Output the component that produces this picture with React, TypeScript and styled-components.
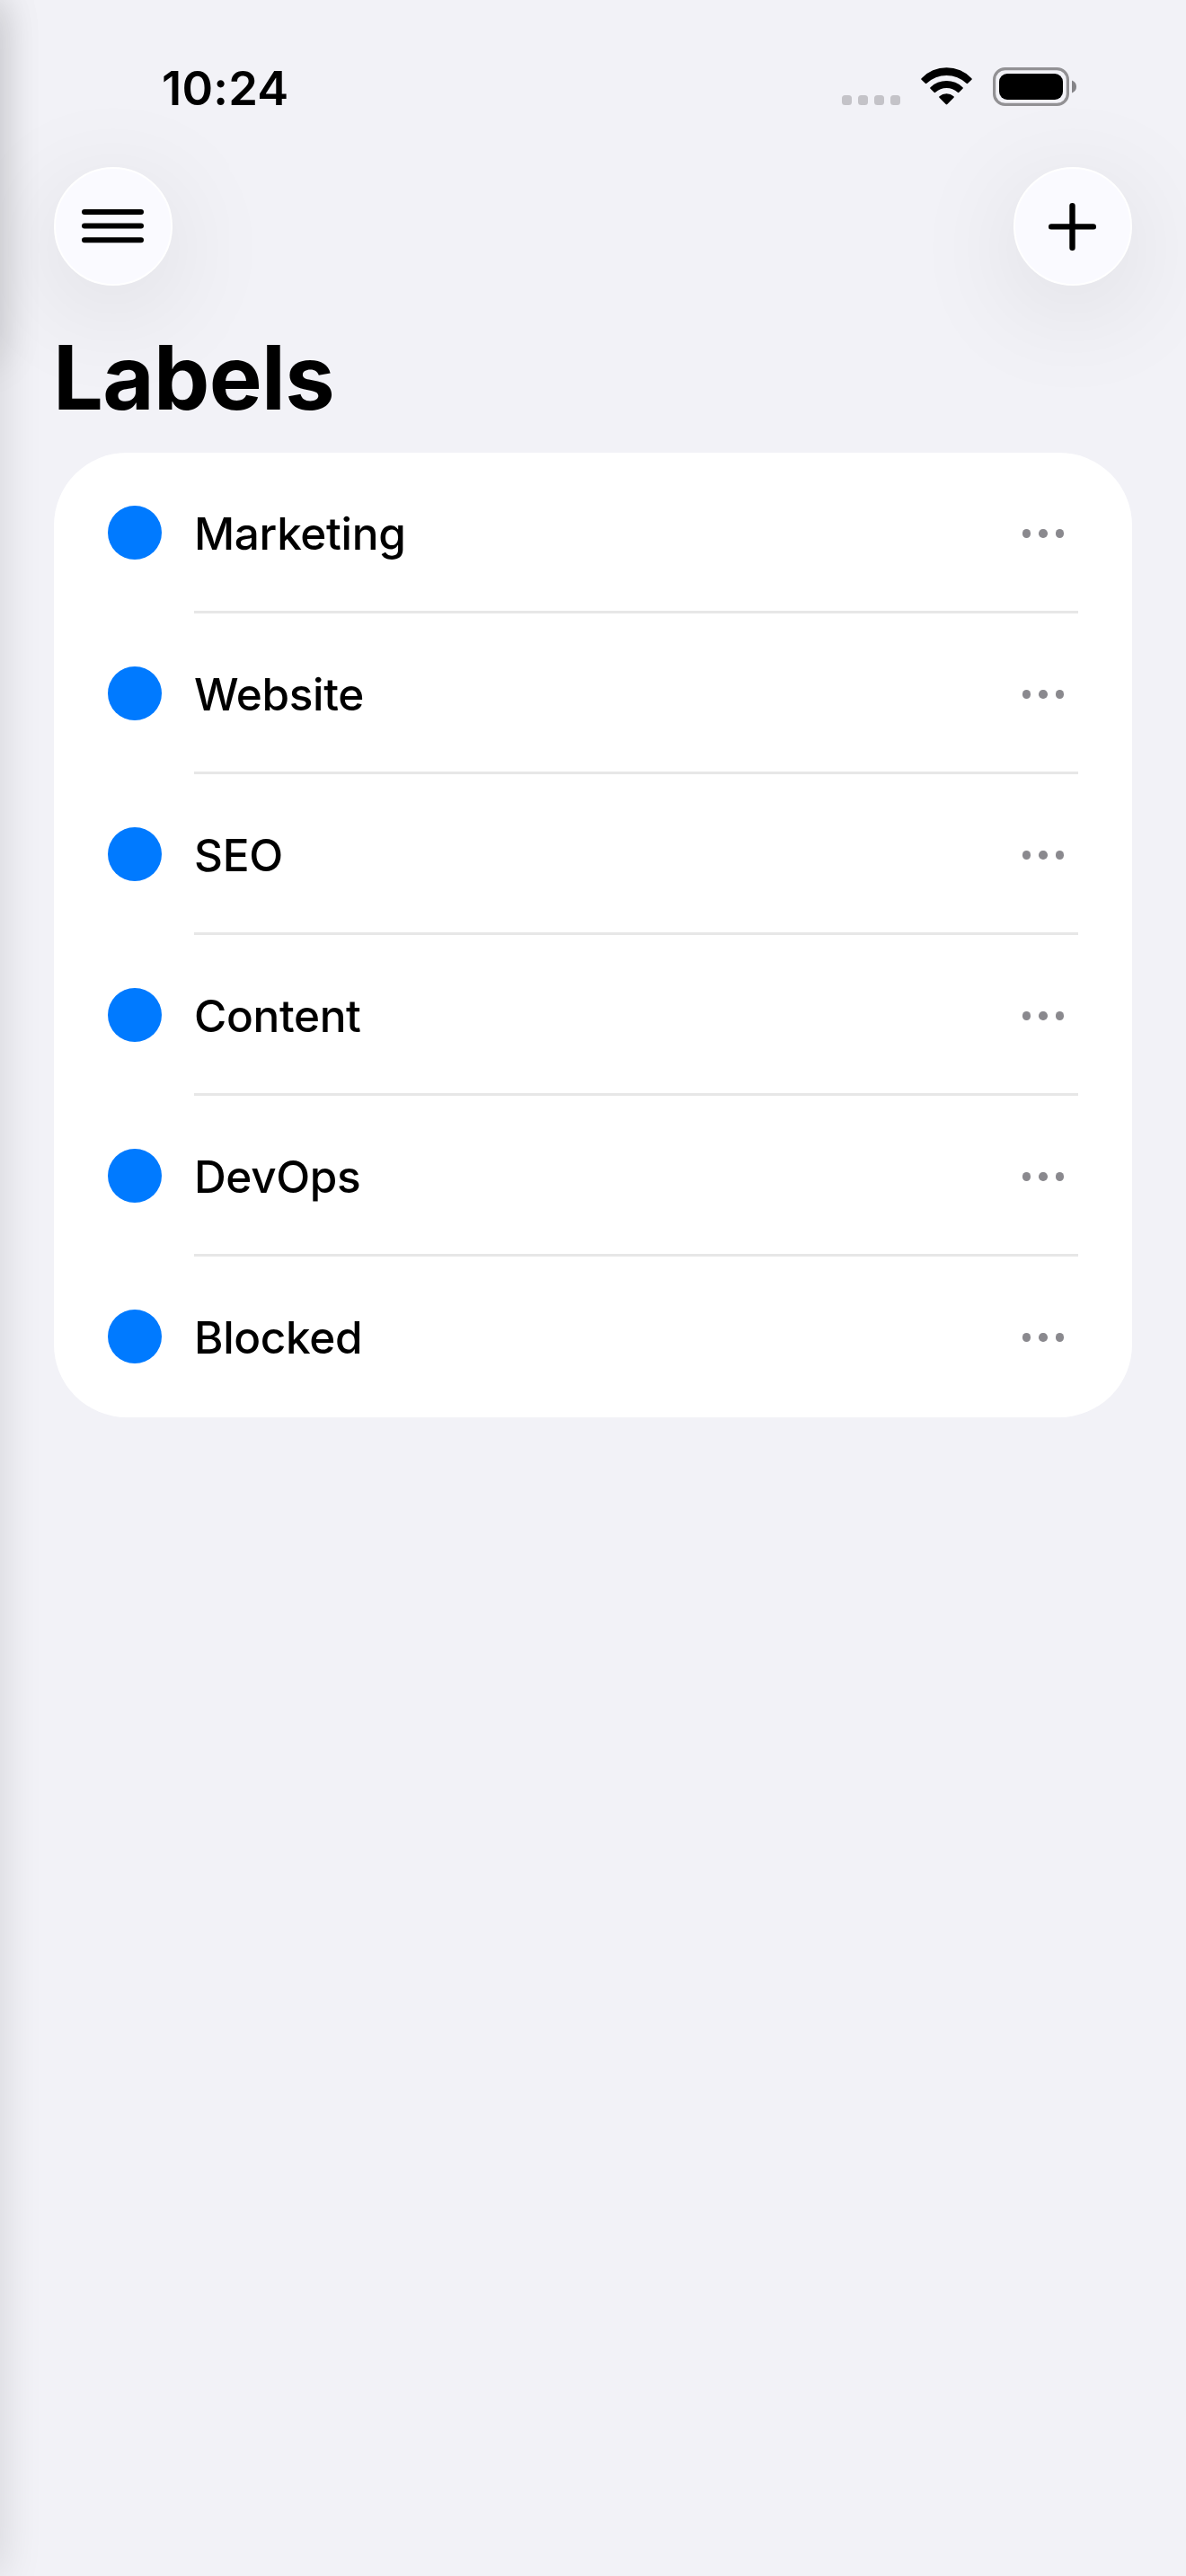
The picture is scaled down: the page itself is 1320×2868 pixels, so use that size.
import React from "react";
import styled, { createGlobalStyle } from "styled-components";

const GlobalStyle = createGlobalStyle`
  *, *::before, *::after { box-sizing: border-box; }
  body { margin: 0; background: #f2f2f7; }
  h1, ul { margin: 0; padding: 0; }
`;

const Screen = styled.main`
  position: relative;
  width: 1320px;
  height: 2868px;
  overflow: hidden;
  background: #f2f2f7;
  color: #000;
  font-family: Inter, "Liberation Sans", sans-serif;
`;

const EdgeShadow = styled.div<{ $height: number; $strength: number }>`
  position: absolute;
  left: -40px;
  top: 0;
  width: 40px;
  height: ${(p) => p.$height}px;
  pointer-events: none;
  box-shadow: 0 0 48px rgba(0, 0, 0, ${(p) => p.$strength});
`;

const StatusBar = styled.header`
  display: flex;
  align-items: flex-start;
  justify-content: space-between;
  height: 186px;
  padding: 75px 121px 0 180px;
`;

const Time = styled.time`
  font-size: 52.5px;
  line-height: 46px;
  font-weight: 600;
  letter-spacing: 0.2px;
`;

const StatusIcons = styled.div`
  display: flex;
  align-items: flex-start;
`;

const SignalDots = styled.div`
  display: flex;
  gap: 7px;
  margin: 31px 23px 0 0;
`;

const SignalDot = styled.span`
  width: 11px;
  height: 11px;
  border-radius: 3.5px;
  background: #c4c3c8;
`;

const WifiIcon = styled.svg`
  width: 57px;
  height: 42px;
  margin-right: 23px;
`;

const BatteryIcon = styled.svg`
  width: 94px;
  height: 43px;
`;

const Toolbar = styled.nav`
  display: flex;
  justify-content: space-between;
  padding: 0 60px;
`;

const RoundButton = styled.button`
  display: flex;
  width: 132px;
  height: 132px;
  padding: 0;
  border: 2px solid #fff;
  border-radius: 50%;
  background: #fafaff;
  box-shadow: 0 24px 124px rgba(0, 0, 0, 0.1);
  svg { width: 128px; height: 128px; }
`;

const Title = styled.h1`
  height: 186px;
  padding: 42px 0 0 59px;
  font-size: 99px;
  line-height: 120px;
  font-weight: 700;
  letter-spacing: -0.7px;
`;

const Card = styled.ul`
  display: flex;
  flex-direction: column;
  margin: 0 60px;
  list-style: none;
  background: #fff;
  border-radius: 81px;
`;

const Row = styled.li`
  display: flex;
  align-items: stretch;
  height: 179px;
  padding: 0 60px;
`;

const Swatch = styled.span`
  width: 60px;
  height: 60px;
  margin: 59.3px 36px 0 0;
  border-radius: 50%;
  background: #007aff;
`;

const RowBody = styled.div<{ $last: boolean }>`
  display: flex;
  flex: 1;
  justify-content: space-between;
  border-bottom: 3px solid ${(p) => (p.$last ? "transparent" : "#e7e7e7")};
`;

const Name = styled.span`
  padding-top: 60px;
  font-size: 49.5px;
  line-height: 60px;
  font-weight: 500;
  letter-spacing: -0.35px;
`;

const MoreButton = styled.button`
  display: flex;
  align-items: center;
  gap: 9px;
  height: 60px;
  margin: 60px 16px 0 0;
  padding: 0;
  border: 0;
  background: none;
`;

const MoreDot = styled.span`
  width: 9.5px;
  height: 9.5px;
  border-radius: 50%;
  background: #8a898e;
`;

const labels = ["Marketing", "Website", "SEO", "Content", "DevOps", "Blocked"];

export default function App() {
  return (
    <Screen>
      <GlobalStyle />
      <StatusBar>
        <Time>10:24</Time>
        <StatusIcons>
          <SignalDots>
            {[0, 1, 2, 3].map((i) => (
              <SignalDot key={i} />
            ))}
          </SignalDots>
          <WifiIcon viewBox="0 0 57 42" aria-label="Wi-Fi">
            <path d="M0.6 12.2 A38.5 38.5 0 0 1 56.4 12.2 Q57.2 13 56.4 13.8 L52.2 17.8 Q51.4 18.5 50.6 17.8 A32 32 0 0 0 6.4 17.8 Q5.6 18.5 4.8 17.8 L0.6 13.8 Q-0.2 13 0.6 12.2Z" />
            <path d="M10.5 22.2 A26 26 0 0 1 46.5 22.2 Q47.3 23 46.5 23.8 L42.4 27.8 Q41.6 28.5 40.8 27.8 A18 18 0 0 0 16.2 27.8 Q15.4 28.5 14.6 27.8 L10.5 23.8 Q9.7 23 10.5 22.2Z" />
            <path d="M20.5 32.2 A12 12 0 0 1 36.5 32.2 Q37.3 33 36.5 33.8 L29.3 41 Q28.5 41.8 27.7 41 L20.5 33.8 Q19.7 33 20.5 32.2Z" />
          </WifiIcon>
          <BatteryIcon viewBox="0 0 94 43" aria-label="Battery">
            <rect x="1.6" y="1.6" width="81.8" height="39.8" rx="12" fill="none" stroke="#929194" strokeWidth="3.2" />
            <rect x="7" y="7" width="71" height="29" rx="9" />
            <path d="M88 14.5 Q93 16.5 93 21.5 Q93 26.5 88 28.5Z" fill="#858488" />
          </BatteryIcon>
        </StatusIcons>
      </StatusBar>
      <Toolbar>
        <RoundButton aria-label="Menu">
          <svg viewBox="62 188 128 128" stroke="#000" strokeWidth="6" strokeLinecap="round">
            <path d="M94 236H157M94 251.6H157M94 267.2H157" />
          </svg>
        </RoundButton>
        <RoundButton aria-label="Add label">
          <svg viewBox="1130 188 128 128" stroke="#000" strokeWidth="6.4" strokeLinecap="round">
            <path d="M1170.2 252.4H1216.8M1193.5 229.1V275.7" />
          </svg>
        </RoundButton>
      </Toolbar>
      <Title>Labels</Title>
      <Card>
        {labels.map((label, i) => (
          <Row key={label}>
            <Swatch />
            <RowBody $last={i === labels.length - 1}>
              <Name>{label}</Name>
              <MoreButton aria-label="More">
                <MoreDot />
                <MoreDot />
                <MoreDot />
              </MoreButton>
            </RowBody>
          </Row>
        ))}
      </Card>
      <EdgeShadow $height={2868} $strength={0.14} />
      <EdgeShadow $height={400} $strength={0.13} />
    </Screen>
  );
}
